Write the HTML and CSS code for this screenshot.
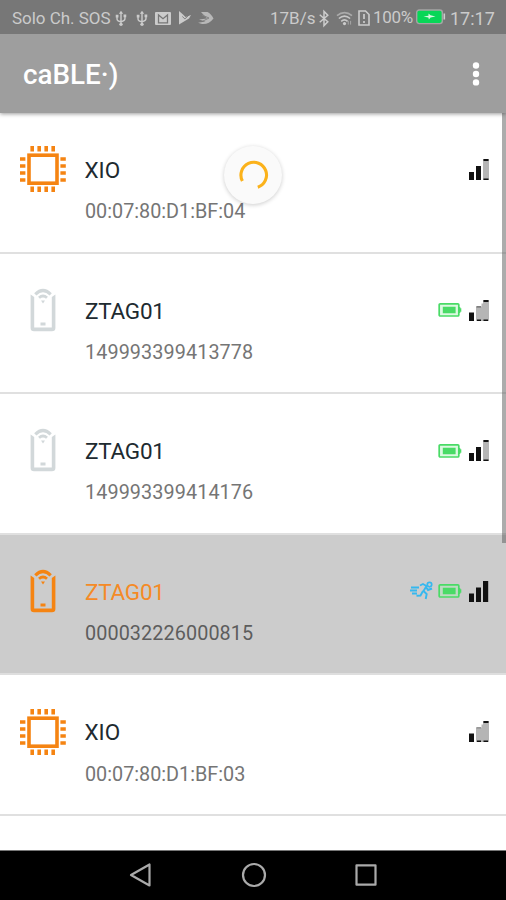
FILE: index.html
```
<!DOCTYPE html>
<html lang="en">
<head>
<meta charset="utf-8">
<title>caBLE</title>
<link rel="stylesheet" href="styles.css">
</head>
<body>
<svg class="defs" aria-hidden="true">
  <symbol id="chip" viewBox="0 0 48 48">
    <rect x="10" y="10.2" width="28" height="28" fill="none" stroke="currentColor" stroke-width="3.6"/>
    <path d="M13.2 1v5.6M20.2 1v5.6M27.2 1v5.6M34.2 1v5.6M13.2 41.6v5.4M20.2 41.6v5.4M27.2 41.6v5.4M34.2 41.6v5.4M1 14h5.4M1 21h5.4M1 28h5.4M1 35h5.4M41.4 14h5.4M41.4 21h5.4M41.4 28h5.4M41.4 35h5.4" fill="none" stroke="currentColor" stroke-width="3.6"/>
  </symbol>
  <symbol id="tag" viewBox="0 0 48 48">
    <g fill="none" stroke="currentColor">
      <path d="M11.6 8.4L15.2 11V41.4H32.8V11L36.4 8.4V42Q36.4 45.2 33 45.2H15Q11.6 45.2 11.6 42Z" fill="currentColor" stroke="none"/>
      <path d="M16.3 8.3Q24 .8 31.7 8.3" stroke-width="3.2"/>
      <path d="M20 11.8Q24 8.3 28 11.8" stroke-width="2.8"/>
    </g>
    <path d="M22 14.5h4L24 17.5ZM21.5 36.4h5v3h-5Z" fill="currentColor"/>
  </symbol>
  <symbol id="battery" viewBox="0 0 24 16">
    <rect x="1.2" y="1.8" width="19.6" height="12.2" rx="1" fill="#a9efb7" fill-opacity=".4" stroke="currentColor" stroke-width="1.7"/>
    <path d="M4.8 4.8h12.8v6.4H4.8ZM21 5h1.3v1.2h1v3.6h-1V11H21Z" fill="currentColor"/>
  </symbol>
  <symbol id="runner" viewBox="0 0 24 20">
    <path d="M1 6.5h8M0 9.5h7M2 12.5h5M10 4.5l3-1.5 3.5 2-3 5 3.2 3-1 5M13 10l-2.5 4.5-4 .2M16 6l2 3 4-1.5" fill="none" stroke="currentColor" stroke-width="1.9"/>
    <circle cx="19.5" cy="3.6" r="2.2" fill="none" stroke="currentColor" stroke-width="1.7"/>
  </symbol>
  <symbol id="usb" viewBox="0 0 12 18">
    <path d="M6 3v12M1.8 7v2.5Q1.8 11.6 6 12.4Q10.2 11.6 10.2 9V6" fill="none" stroke="currentColor" stroke-width="1.5"/>
    <path d="M3.7 4L6 .8 8.3 4ZM.3 5h3v3h-3ZM8.7 4.8h3v3h-3Z" fill="currentColor"/><circle cx="6" cy="15.2" r="1.8" fill="currentColor"/>
  </symbol>
</svg>

<header>
  <div class="status">
    <span class="carrier">Solo Ch. SOS</span>
    <svg class="usb" viewBox="0 0 12 18"><use href="#usb"/></svg>
    <svg class="usb second" viewBox="0 0 12 18"><use href="#usb"/></svg>
    <svg class="mail" viewBox="0 0 16 13"><rect width="16" height="13" rx="1" fill="#cbcbcb"/><path d="M3.5 10.8V3L8 6.7 12.5 3v7.8Z" fill="none" stroke="#777" stroke-width="1.3"/></svg>
    <svg class="play" viewBox="0 0 14 14"><path d="M1 0l4 3.5L7.5 6 13 4 11 7.5 1 13.5Z" fill="#cbcbcb"/><path d="M4.3 5.5l2.6 2.4L12 3" fill="none" stroke="#777" stroke-width=".9"/></svg>
    <svg class="swift" viewBox="0 0 16 13"><path d="M3 0H9.5Q13 1.5 15.5 6.5 11 12.5 4 12L0 10.8 7.5 9.5 1 7.5 9 6.5Z" fill="#b8b8b8"/><path d="M4 3l7 3-6 3" fill="none" stroke="#858585"/></svg>
    <span class="space"></span>
    <span class="speed">17B/s</span>
    <svg class="bluetooth" viewBox="0 0 12 18"><path d="M1.5 5L10 12.5 6 16.5V1.5l4 4L1.5 13" fill="none" stroke="#ccc" stroke-width="1.6"/></svg>
    <svg class="wifi" viewBox="0 0 18 16"><g fill="none" stroke="#c8c8c8" stroke-width="1.7"><path d="M1 5Q9-1.5 17 5" stroke="#aaa"/><path d="M3 8Q9 3 15 8M5.5 11Q9 8 12.3 11"/></g><circle cx="9" cy="13.4" r="1.7" fill="#ccc"/><path d="M13 10.5v4M15.5 10.5v4" stroke="#aaa"/></svg>
    <svg class="sim" viewBox="0 0 12 16"><path d="M1 1h6.5L11 4.5V15H1Z" fill="none" stroke="#ccc" stroke-width="1.6"/><path d="M6 4v5M6 11v2" stroke="#ccc" stroke-width="1.7"/></svg>
    <span class="percent">100%</span>
    <svg class="charge" viewBox="0 0 30 16"><rect x=".7" y="1" width="25.6" height="13.6" rx="2.5" fill="#08d657" stroke="#a5a5a5" stroke-width="1.4"/><path d="M27.5 4.5h1.6v6h-1.6Z" fill="#ccc"/><path d="M7.5 7.5l5-.8V4.5l2 1.8 5 1.2-5 1.1-1.6 2-.5-2Z" fill="#d9f8e3"/></svg>
    <span class="clock">17:17</span>
  </div>
  <div class="toolbar">
    <h1>caBLE·)</h1>
    <svg class="more" viewBox="0 0 8 24"><circle cx="4" cy="3.5" r="3.2"/><circle cx="4" cy="12" r="3.2"/><circle cx="4" cy="20.4" r="3.2"/></svg>
  </div>
</header>

<main>
  <article class="row">
    <svg class="device"><use href="#chip"/></svg>
    <div class="info"><h2 class="short">XIO</h2><p class="mac">00:07:80:D1:BF:04</p></div>
    <div class="state">
      <svg class="signal" viewBox="0 0 20 22"><path class="on" d="M0 13h5v8H0ZM7 7h5v14H7Z"/><path class="off" d="M14 0h6v21h-6Z"/><path class="on" d="M14.5 0h5v2h-5ZM14.5 19.5h5V21h-5Z"/></svg>
    </div>
  </article>
  <article class="row idle">
    <svg class="device"><use href="#tag"/></svg>
    <div class="info"><h2>ZTAG01</h2><p>149993399413778</p></div>
    <div class="state">
      <svg class="battery"><use href="#battery"/></svg>
      <svg class="signal" viewBox="0 0 20 22"><path class="off" d="M7 6.5h5.5V3.5H14V0h6v21H7Z"/><path class="on" d="M0 12.5h5V21H0ZM14.5 0h5v2h-5ZM8 19.5h4V21H8ZM14.5 19.5h4.5V21h-4.5Z"/><path d="M7.5 6.2h4.5v1.3H7.5Z" fill="#666"/></svg>
    </div>
  </article>
  <article class="row idle">
    <svg class="device"><use href="#tag"/></svg>
    <div class="info"><h2>ZTAG01</h2><p>149993399414176</p></div>
    <div class="state">
      <svg class="battery"><use href="#battery"/></svg>
      <svg class="signal" viewBox="0 0 20 22"><path class="on" d="M0 13h5v8H0ZM7 7h5v14H7Z"/><path class="off" d="M14 0h6v21h-6Z"/><path class="on" d="M14.5 0h5v2h-5ZM14.5 19.5h5V21h-5Z"/></svg>
    </div>
  </article>
  <article class="row selected">
    <svg class="device"><use href="#tag"/></svg>
    <div class="info"><h2>ZTAG01</h2><p>000032226000815</p></div>
    <div class="state">
      <svg class="runner"><use href="#runner"/></svg>
      <svg class="battery"><use href="#battery"/></svg>
      <svg class="signal" viewBox="0 0 20 22"><path class="on" d="M0 12.5h5V21H0ZM7 6.5h5V21H7ZM14 0h5.2v21H14Z"/></svg>
    </div>
  </article>
  <article class="row">
    <svg class="device"><use href="#chip"/></svg>
    <div class="info"><h2 class="short">XIO</h2><p class="mac">00:07:80:D1:BF:03</p></div>
    <div class="state">
      <svg class="signal" viewBox="0 0 20 22"><path class="off" d="M7 6.5h5.5V3.5H14V0h6v21H7Z"/><path class="on" d="M0 12.5h5V21H0ZM14.5 0h5v2h-5ZM8 19.5h4V21H8ZM14.5 19.5h4.5V21h-4.5Z"/><path d="M7.5 6.2h4.5v1.3H7.5Z" fill="#888"/></svg>
    </div>
  </article>
  <div class="scrollbar"></div>
  <div class="spinner"><svg viewBox="0 0 58 58"><path d="M18.4 35A12.8 12.8 0 1 1 33.8 41.2" fill="none" stroke="#fbb21b" stroke-width="3.1"/></svg></div>
</main>

<nav>
  <svg viewBox="0 0 24 26"><path d="M2 13L20.5 2.5v21Z"/></svg>
  <svg viewBox="0 0 26 26"><circle cx="13" cy="13" r="11"/></svg>
  <svg viewBox="0 0 24 26"><rect x="2.5" y="3.3" width="19" height="19.4"/></svg>
</nav>
</body>
</html>
```

FILE: styles.css
```
* { box-sizing: border-box; }
body { margin: 0; width: 506px; height: 900px; display: flex; flex-direction: column; overflow: hidden; background: #fff; font-family: Roboto, sans-serif; }
h1, h2, p { margin: 0; font-weight: 400; white-space: nowrap; }
svg { display: block; flex: none; overflow: visible; }
.defs { position: absolute; width: 0; height: 0; }

header { flex: none; position: relative; z-index: 1; background: #9e9e9e; box-shadow: 0 1px 4px rgba(0, 0, 0, .4); }
.status { height: 34px; display: flex; align-items: center; padding: 2px 11px 0 12px; background: #777; color: #cbcbcb; font-size: 17px; white-space: nowrap; }
.carrier { width: 98px; letter-spacing: -.02px; }
.usb { width: 12px; height: 17px; margin-left: 5px; }
.second { margin-left: 9px; }
.mail { width: 16px; height: 13px; margin-left: 7px; }
.play { width: 14px; height: 14px; margin-left: 7px; }
.swift { width: 16px; height: 13px; margin-left: 6px; }
.space { flex: 1; }
.speed { width: 45px; }
.bluetooth { width: 12px; height: 17px; margin-left: 3px; }
.wifi { width: 17px; height: 15px; margin-left: 6px; }
.sim { width: 12px; height: 16px; margin-left: 5px; }
.percent { width: 40px; margin-left: 3px; font-size: 17px; letter-spacing: -.3px; position: relative; top: -1px; }
.charge { width: 30px; height: 16px; margin-left: 3px; position: relative; top: -1px; }
.clock { width: 45px; margin-left: 4px; font-size: 18px; }
.toolbar { height: 79px; display: flex; align-items: center; justify-content: space-between; padding: 0 26px 0 23px; color: #fff; }
h1 { font-size: 27.8px; font-weight: 500; line-height: 34px; padding-top: 2px; }
.more { width: 8px; height: 24px; fill: #fff; }

main { flex: none; position: relative; height: 737px; overflow: hidden; }
.row { height: 140.6px; display: flex; border-bottom: 2px solid #e0e0e0; padding: 32.2px 16px 0 19px; color: #f58412; }
.device { width: 48px; height: 48px; }
.info { flex: 1; margin-left: 18px; padding-top: 11.8px; }
h2 { font-size: 22.5px; line-height: 26px; color: #202a30; letter-spacing: -.25px; }
.short { letter-spacing: 0; margin-left: -.5px; }
.info p { font-size: 19.8px; line-height: 24px; margin-top: 17.3px; color: #757575; letter-spacing: .1px; }
.info .mac { letter-spacing: 0; }
.idle .device { color: #d2d8da; }
.selected { background: #ccc; border-color: #dedede; }
.selected h2 { color: #f58a26; }
.selected p { color: #5d5d5d; }
.state { display: flex; height: 22px; margin-top: 13.8px; }
.battery { width: 24px; height: 16px; margin: 2.6px 7px 0 0; color: #49db66; }
.runner { width: 24px; height: 20px; margin: 0 4px 0 0; color: #35b8ef; }
.signal { width: 20px; height: 22px; margin-right: 1px; }
.on { fill: #111; }
.off { fill: #b5b5b5; }
.scrollbar { position: absolute; top: 0; right: 0; width: 4.5px; height: 430px; background: rgba(90, 90, 90, .5); }
.spinner { position: absolute; left: 224px; top: 33px; width: 58px; height: 58px; border-radius: 50%; background: #fafafa; box-shadow: 0 1px 4px rgba(0, 0, 0, .2); }

nav { flex: 1; display: flex; align-items: center; justify-content: space-between; background: #000; border-top: 1px solid #777; padding: 0 128px 1px 129px; }
nav svg { width: 24px; height: 26px; fill: none; stroke: #aaa; stroke-width: 2.2; stroke-linejoin: round; }
nav svg:nth-child(2) { width: 26px; }
```
